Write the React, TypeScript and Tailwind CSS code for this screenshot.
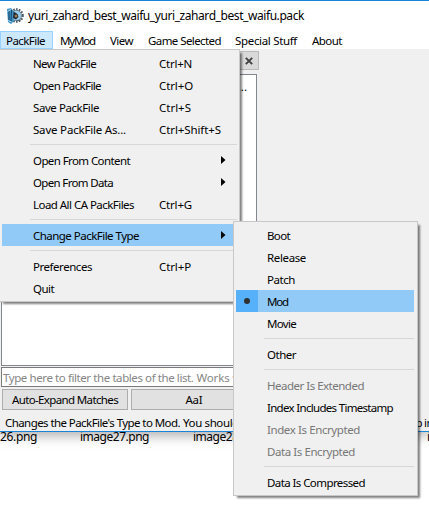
import React, { useLayoutEffect, useRef, useState } from 'react';

/** Text tracked so that it fills exactly `w` pixels. */
function T({ w, children, className = '' }: { w: number; children: string; className?: string }) {
  const ref = useRef<HTMLSpanElement>(null);
  const [tracking, setTracking] = useState(0);
  useLayoutEffect(() => {
    const natural = ref.current!.getBoundingClientRect().width;
    setTracking((w - natural) / children.length);
  }, [w, children]);
  return (
    <span ref={ref} className={`inline-block whitespace-pre ${className}`} style={{ letterSpacing: tracking }}>
      {children}
    </span>
  );
}

type Item = { label: string; w: number; keys?: string; kw?: number; sub?: boolean; active?: boolean; disabled?: boolean } | null;

const fileItems: Item[] = [
  { label: 'New PackFile', w: 63, keys: 'Ctrl+N', kw: 33 },
  { label: 'Open PackFile', w: 68, keys: 'Ctrl+O', kw: 34 },
  { label: 'Save PackFile', w: 66, keys: 'Ctrl+S', kw: 32 },
  { label: 'Save PackFile As...', w: 93, keys: 'Ctrl+Shift+S', kw: 62 },
  null,
  { label: 'Open From Content', w: 97, sub: true },
  { label: 'Open From Data', w: 80, sub: true },
  { label: 'Load All CA PackFiles', w: 101, keys: 'Ctrl+G', kw: 33 },
  null,
  { label: 'Change PackFile Type', w: 106, sub: true, active: true },
  null,
  { label: 'Preferences', w: 59, keys: 'Ctrl+P', kw: 32 },
  { label: 'Quit', w: 21 },
];

const typeItems: Item[] = [
  { label: 'Boot', w: 23 },
  { label: 'Release', w: 39 },
  { label: 'Patch', w: 28 },
  { label: 'Mod', w: 21, active: true },
  { label: 'Movie', w: 29 },
  null,
  { label: 'Other', w: 29 },
  null,
  { label: 'Header Is Extended', w: 97, disabled: true },
  { label: 'Index Includes Timestamp', w: 126 },
  { label: 'Index Is Encrypted', w: 93, disabled: true },
  { label: 'Data Is Encrypted', w: 88, disabled: true },
  null,
  { label: 'Data Is Compressed', w: 98 },
];

function FileMenu() {
  return (
    <div className="absolute -left-px top-[49px] h-[253px] w-[241px] border border-[#c8c8c8] bg-[#f0f0f0] py-[2px] pl-[2px] pr-[2px] shadow-[3px_3px_2px_-1px_rgba(0,0,0,0.5)]">
      {fileItems.map((it, i) =>
        it ? (
          <div key={i} className={`flex h-[22px] items-center pl-[31px] pt-px ${it.active ? 'bg-[#91c9f7]' : ''}`}>
            <div className="w-[126px]"><T w={it.w}>{it.label}</T></div>
            {it.keys && <T w={it.kw!}>{it.keys}</T>}
            {it.sub && (
              <svg className="-mt-[1px] ml-[62px]" width="5" height="8" viewBox="0 0 5 8"><path d="M0 0 4.5 4 0 8Z" fill="#000" /></svg>
            )}
          </div>
        ) : (
          <div key={i} className="h-[9px] pl-7 pt-1"><div className="h-px bg-[#d7d7d7]" /></div>
        ),
      )}
    </div>
  );
}

function TypeMenu() {
  return (
    <div className="absolute left-[233px] top-[221px] h-[275px] w-[185px] border border-[#c8c8c8] bg-[#f0f0f0] px-[2px] py-[2px] pr-[3px] shadow-[3px_3px_2px_-1px_rgba(0,0,0,0.5)]">
      {typeItems.map((it, i) =>
        it ? (
          <div key={i} className={`flex h-[22px] items-center ${it.active ? 'bg-[#91c9f7]' : ''} ${it.disabled ? 'text-[#777]' : ''}`}>
            <div className={`flex h-full w-[22px] items-center justify-center ${it.active ? 'bg-[#56b0fa]' : ''}`}>
              {it.active && <div className="size-[6px] rounded-full bg-[#303030]" />}
            </div>
            <T w={it.w} className="ml-[9px] mt-px">{it.label}</T>
          </div>
        ) : (
          <div key={i} className="h-[9px] pl-7 pt-1"><div className="h-px bg-[#d7d7d7]" /></div>
        ),
      )}
    </div>
  );
}

function AppIcon() {
  return (
    <svg width="17" height="17" viewBox="0 0 17 17">
      <circle cx="9.5" cy="7.5" r="6.2" fill="none" stroke="#4b5a64" strokeWidth="2.2" strokeDasharray="1.6 1.2" />
      <circle cx="9.3" cy="7.5" r="5.2" fill="#9ccbe8" stroke="#5b7687" strokeWidth=".8" />
      <path d="M0 1 4 0l2.5 3L6 9l1 4-3 3-3-2Z" fill="#3d92c6" />
      <path d="M2 2.5v10M4.6 2 4 13" stroke="#1c4c6d" strokeWidth="1.1" />
      <path d="M.5 3.5 4 1.5M1 12.5l3.5 1.5" stroke="#a8d8f0" />
      <path d="M6.5 3.5 10.5 6 11.5 9 9 11.5 6 10Z" fill="#18293a" />
      <circle cx="9" cy="8" r="1.5" fill="#a27a4c" />
      <path d="m9 13 5-1" stroke="#4e626e" />
    </svg>
  );
}

const menus: [string, number, string][] = [
  ['PackFile', 39, 'w-[53px] border border-[#99d1ff] bg-[#cce8ff] pl-[5px]'],
  ['MyMod', 35, 'w-[50px] pl-[7px]'],
  ['View', 23, 'w-[38px] pl-[7px]'],
  ['Game Selected', 73, 'w-[87px] pl-[7px]'],
  ['Special Stuff', 62, 'w-[77px] pl-[7px]'],
  ['About', 30, 'w-[50px] pl-[7px]'],
];

export default function App() {
  return (
    <div className="relative h-[514px] w-[429px] overflow-hidden bg-white font-['Noto_Sans','Liberation_Sans',sans-serif] text-[11.5px] leading-[16px] text-black">
      <div className="relative z-10 flex h-[432px] flex-col border-b border-t-1 border-[#1883d7] bg-[#f0f0f0] shadow-[0_3px_12px_rgba(0,0,0,0.35)]">
        <header className="flex h-[30px] shrink-0 items-center bg-white pl-[7px] text-[12px]">
          <AppIcon />
          <T w={276} className="ml-1">yuri_zahard_best_waifu_yuri_zahard_best_waifu.pack</T>
        </header>
        <nav className="flex h-[18px] shrink-0 bg-white">
          {menus.map(([label, w, cls]) => (
            <div key={label} className={`flex items-center pt-px ${cls}`}><T w={w}>{label}</T></div>
          ))}
        </nav>
        <main className="flex w-[259px] shrink-0 flex-col pt-[2px]">
          <div className="ml-[238px] flex h-[19px] w-[21px] items-center justify-center border border-[#bababa] bg-[#d9d9d9]">
            <svg width="8" height="8" viewBox="0 0 8 8"><path d="M.8 .8 7.2 7.2M7.2 .8 .8 7.2" stroke="#404040" strokeWidth="1.9" /></svg>
          </div>
          <div className="ml-px mt-1 flex h-[292px] w-[256px] justify-end border border-[#828790] bg-white pr-[9px] pt-[4px]">...</div>
          <div className="ml-px mt-px flex h-5 w-[256px] items-center overflow-hidden border border-[#7a7a7a] bg-white pl-px pt-[2px] text-[#868686]">
            <T w={190.5} className="shrink-0">Type here to filter the tables of the list.</T>
            <T w={33} className="ml-[3px] shrink-0">Works</T>
            <T w={22} className="ml-[3px] shrink-0">with</T>
          </div>
          <div className="ml-[2px] mt-[2px] flex h-[21px] gap-[3px]">
            <div className="flex w-[126px] items-center justify-center border border-[#adadad] bg-[#e1e1e1] pt-px"><T w={106}>Auto-Expand Matches</T></div>
            <div className="flex w-[126px] items-center justify-center border border-[#adadad] bg-[#e1e1e1] pt-px"><T w={17}>AaI</T></div>
          </div>
        </main>
        <footer className="flex h-[21px] items-center pl-[5px] pt-[5px]">
          <T w={175} className="shrink-0">Changes the PackFile's Type to Mod.</T>
          <T w={56} className="ml-[3px] shrink-0">You should</T>
          <T w={167} className="shrink-0"> use this for mods that should show</T>
          <T w={13} className="ml-[3px] shrink-0">up</T>
          <T w={9} className="ml-[2px] shrink-0">in</T>
        </footer>
      </div>
      <div className="-mt-[3px] flex text-[12px]">
        <T w={37} className="shrink-0">26.png</T>
        <T w={69} className="ml-[43px] shrink-0">image27.png</T>
        <T w={69} className="ml-[44px] shrink-0">image28.png</T>
        <T w={69} className="ml-[165px] shrink-0">image30.png</T>
      </div>
      <div className="absolute inset-0 z-20"><FileMenu /><TypeMenu /></div>
    </div>
  );
}
